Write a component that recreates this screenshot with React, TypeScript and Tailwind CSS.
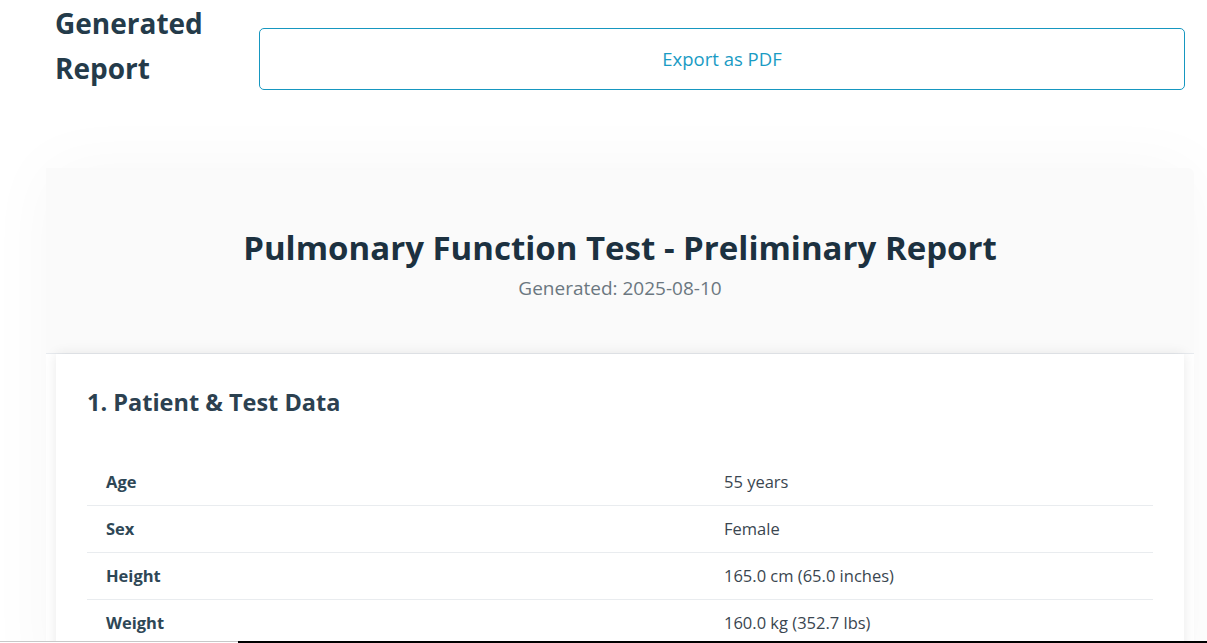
import React from "react";

const rows = [
  ["Age", "55 years"],
  ["Sex", "Female"],
  ["Height", "165.0 cm (65.0 inches)"],
  ["Weight", "160.0 kg (352.7 lbs)"],
];

export default function App() {
  return (
    <div
      className="min-h-[643px] bg-white overflow-hidden"
      style={{ fontFamily: '"Open Sans", "Noto Sans", sans-serif' }}
    >
      <div className="flex items-start pl-[55px] pr-[22px]">
        <h1 className="w-[204px] text-[28px] leading-[45px] font-bold text-[#243b4a] pt-[1px]">
          Generated Report
        </h1>
        <button className="flex-1 mt-[28px] h-[62px] rounded-[5px] border border-[#1697c0] text-[#1a9bc4] text-[18.5px] bg-white">
          Export as PDF
        </button>
      </div>

      <div className="mt-[77px] ml-[46px] mr-[13px] rounded-[8px] shadow-[0_0_70px_rgba(0,0,0,0.035)]">
        <div className="bg-[#fafafa] h-[186px] border-b border-[#e7eaee] rounded-tr-[6px] flex flex-col items-center pt-[57px]">
          <div className="text-[33px] leading-[46px] font-bold text-[#1c3140]">
            Pulmonary Function Test - Preliminary Report
          </div>
          <div className="text-[19px] leading-[28px] text-[#6b7780] mt-[3px]">
            Generated: 2025-08-10
          </div>
        </div>
        <div className="mx-[10px] bg-white shadow-[0_0_12px_rgba(0,0,0,0.09)] px-[31px] pt-[31px] pb-[40px]">
          <h2 className="text-[23.5px] leading-[34px] font-bold text-[#2c4150]">
            1. Patient &amp; Test Data
          </h2>
          <div className="mt-[40px]">
            {rows.map(([k, v]) => (
              <div
                key={k}
                className="grid grid-cols-[618px_1fr] h-[47px] items-center border-b border-[#e9ecef] text-[16.5px]"
              >
                <div className="pl-[19px] font-bold text-[#2e4756]">{k}</div>
                <div className="pl-[19px] text-[#3a4650]">{v}</div>
              </div>
            ))}
          </div>
        </div>
      </div>
      <div className="fixed bottom-0 left-0 right-0 h-[2px] flex">
        <div className="w-[238px] border-t border-[#c8c8c8] bg-white"></div>
        <div className="flex-1 bg-black"></div>
      </div>
    </div>
  );
}
